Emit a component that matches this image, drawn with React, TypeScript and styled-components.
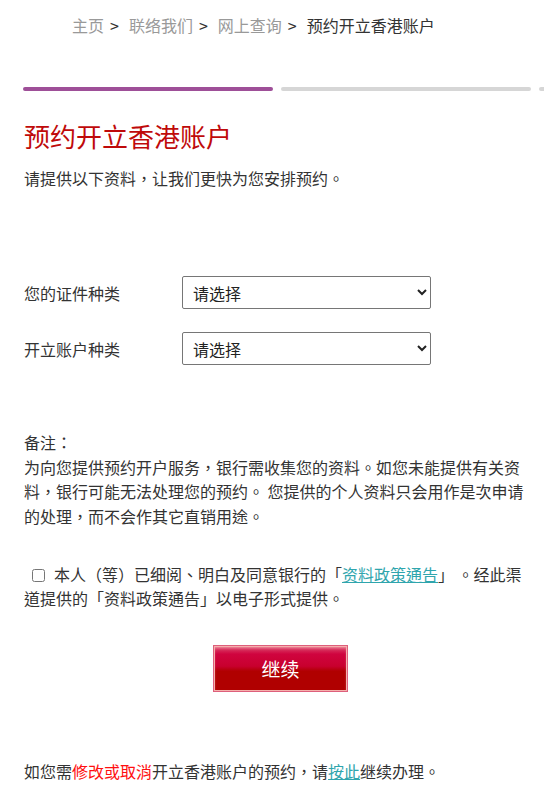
import React from "react";
import styled, { createGlobalStyle } from "styled-components";

const GlobalStyle = createGlobalStyle`
  html, body {
    margin: 0;
    padding: 0;
    background: #fff;
    overflow-x: hidden;
  }
  body {
    font-family: "Noto Sans CJK TC", "Noto Sans CJK SC", sans-serif;
    color: #333;
    font-size: 16px;
  }
`;

const steps = [true, false, false];

export default function App() {
  return (
    <Page>
      <GlobalStyle />
      <Breadcrumb>
        <Crumb>主页</Crumb>
        <Sep>&gt;</Sep>
        <Crumb>联络我们</Crumb>
        <Sep>&gt;</Sep>
        <Crumb>网上查询</Crumb>
        <Sep>&gt;</Sep>
        <Crumb $current>预约开立香港账户</Crumb>
      </Breadcrumb>

      <Content>
        <Progress>
          {steps.map((active, i) => (
            <Step key={i} $active={active} />
          ))}
        </Progress>

        <Title>预约开立香港账户</Title>
        <Intro>请提供以下资料，让我们更快为您安排预约。</Intro>

        <Form>
          <Row>
            <Label>您的证件种类</Label>
            <Select defaultValue="">
              <option value="">请选择</option>
            </Select>
          </Row>
          <Row>
            <Label>开立账户种类</Label>
            <Select defaultValue="">
              <option value="">请选择</option>
            </Select>
          </Row>
        </Form>

        <Note>
          备注：
          <br />
          为向您提供预约开户服务，银行需收集您的资料。如您未能提供有关资料，银行可能无法处理您的预约。 您提供的个人资料只会用作是次申请的处理，而不会作其它直销用途。
        </Note>

        <Agree>
          <Check type="checkbox" />
          本人（等）已细阅、明白及同意银行的「<Link href="#">资料政策通告</Link>」 。经此渠道提供的「资料政策通告」以电子形式提供。
        </Agree>

        <ButtonRow>
          <ContinueButton type="button">继续</ContinueButton>
        </ButtonRow>

        <Footnote>
          如您需<Warn>修改或取消</Warn>开立香港账户的预约，请<Link href="#">按此</Link>继续办理。
        </Footnote>
      </Content>
    </Page>
  );
}

const Page = styled.div`
  width: 544px;
  min-height: 786px;
  overflow: hidden;
`;

const Breadcrumb = styled.div`
  padding: 15px 0 0 72px;
  height: 20px;
  line-height: 20px;
  font-size: 16px;
  white-space: nowrap;
`;

const Crumb = styled.span<{ $current?: boolean }>`
  color: ${(p) => (p.$current ? "#333" : "#999")};
`;

const Sep = styled.span`
  color: #333;
  margin: 0 10px 0 6px;
`;

const Content = styled.div`
  padding: 0 20px 0 24px;
`;

const Progress = styled.div`
  display: flex;
  gap: 8px;
  margin: 52px 0 0 -1px;
  width: 800px;
`;

const Step = styled.div<{ $active: boolean }>`
  flex: 0 0 250px;
  height: 4px;
  border-radius: 2px;
  background: ${(p) => (p.$active ? "#9e4f98" : "#d6d6d6")};
`;

const Title = styled.h1`
  margin: 29px 0 0;
  font-size: 26px;
  line-height: 32px;
  font-weight: normal;
  color: #bf0a0a;
`;

const Intro = styled.p`
  margin: 14px 0 0;
  line-height: 24px;
  font-size: 16px;
`;

const Form = styled.div`
  margin-top: 86px;
  display: flex;
  flex-direction: column;
  gap: 23px;
`;

const Row = styled.div`
  display: flex;
  align-items: center;
`;

const Label = styled.label`
  width: 158px;
  font-size: 16px;
  line-height: 24px;
`;

const Select = styled.select`
  width: 249px;
  height: 33px;
  padding: 0 6px;
  border: 1px solid #767676;
  border-radius: 2px;
  background: #fff;
  color: #222;
  font-family: "Noto Sans CJK TC", "Noto Sans CJK SC", sans-serif;
  font-size: 16px;
`;

const Note = styled.p`
  margin: 65px 0 0;
  line-height: 24.6px;
  font-size: 16px;
`;

const Agree = styled.p`
  margin: 34px 0 0;
  line-height: 24px;
  font-size: 16px;
`;

const Check = styled.input`
  width: 13px;
  height: 13px;
  margin: 0 9px 0 8px;
  vertical-align: -1px;
`;

const Link = styled.a`
  color: #2fa5ad;
  text-decoration: underline;
`;

const ButtonRow = styled.div`
  margin-top: 35px;
  display: flex;
  padding-left: 189px;
`;

const ContinueButton = styled.button`
  width: 135px;
  height: 47px;
  border: 1px solid #dd5f7c;
  box-shadow: inset 0 0 0 1px #f5b0ac, inset 0 2px 3px rgba(255, 200, 200, 0.6);
  background: linear-gradient(
    to bottom,
    #dc4d70 0%,
    #d0043f 18%,
    #c8002e 45%,
    #b00000 56%,
    #b00000 100%
  );
  color: #fff;
  font-family: "Noto Sans CJK TC", "Noto Sans CJK SC", sans-serif;
  font-size: 19px;
  cursor: pointer;
`;

const Footnote = styled.p`
  margin: 67px 0 0;
  line-height: 24px;
  font-size: 16px;
`;

const Warn = styled.span`
  color: #ff1010;
`;
